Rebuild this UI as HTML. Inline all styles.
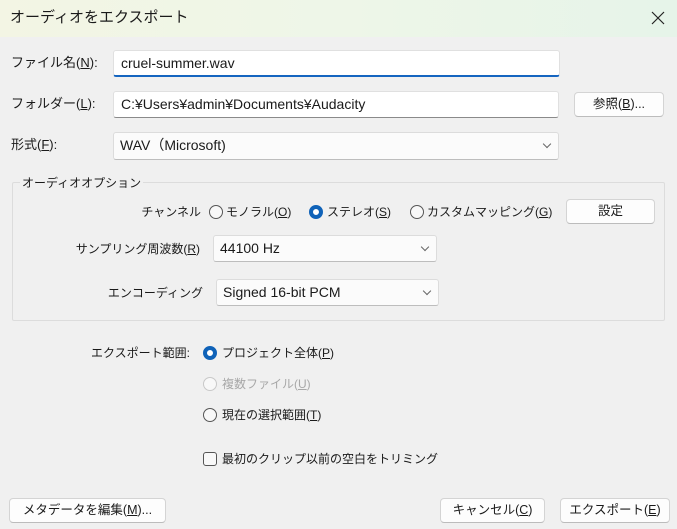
<!DOCTYPE html>
<html><head><meta charset="utf-8"><style>
*{box-sizing:border-box;margin:0;padding:0}
body{width:677px;height:529px;overflow:hidden;background:#f0f0f0;font-family:"Liberation Sans","Noto Sans CJK JP",sans-serif;font-size:12px;color:#1a1a1a;position:relative}
.a{position:absolute;white-space:nowrap;line-height:18px}
.rt{text-align:right}
.title{position:absolute;left:0;top:0;width:677px;height:37px;background:linear-gradient(90deg,#f3f5e4,#eef6e8 50%,#e6f4e9);}
.inp{position:absolute;background:#fff;border:1px solid #e0e0e0;border-bottom:1px solid #8a8a8a;border-radius:3px;padding-left:7px;font-size:14px;line-height:25px}
.sel{position:absolute;background:#fbfbfb;border:1px solid #dcdcdc;border-bottom-color:#bdbdbd;border-radius:3px;padding-left:6px;font-size:14px;line-height:25px}
.chev{position:absolute;right:8px;top:8px;width:6px;height:6px;border-right:1px solid #666;border-bottom:1px solid #666;transform:rotate(45deg)}
.btn{position:absolute;background:#fdfdfd;border:1px solid #d4d4d4;border-bottom-color:#bcbcbc;border-radius:4px;text-align:center;line-height:23px;font-size:12.5px}
.r{position:absolute;width:14px;height:14px;border-radius:50%;border:1px solid #555;background:#f8f8f8}
.r.on{border:4px solid #0f62b8;background:#fff}
.r.dis{border-color:#c8c8c8}
u{text-decoration:underline}
</style></head><body>
<div class="title"></div>
<div class="a" style="left:10px;top:8px;font-size:15px;line-height:20px">オーディオをエクスポート</div>
<svg class="a" style="left:651px;top:11px" width="14" height="14"><path d="M1 1L13 13M13 1L1 13" stroke="#222" stroke-width="1.2"/></svg>

<div class="a" style="left:11px;top:54px;font-size:13px">ファイル名(<u>N</u>):</div>
<div class="inp" style="left:113px;top:50px;width:447px;height:27px;border-bottom:2px solid #1565c0">cruel-summer.wav</div>
<div class="a" style="left:11px;top:95px;font-size:13px">フォルダー(<u>L</u>):</div>
<div class="inp" style="left:113px;top:91px;width:446px;height:27px">C:¥Users¥admin¥Documents¥Audacity</div>
<div class="btn" style="left:574px;top:92px;width:90px;height:25px">参照(<u>B</u>)...</div>
<div class="a" style="left:11px;top:136px;font-size:13px">形式(<u>F</u>):</div>
<div class="sel" style="left:113px;top:132px;width:446px;height:28px">WAV（Microsoft)<span class="chev"></span></div>

<div style="position:absolute;left:12px;top:182px;width:653px;height:139px;border:1px solid #dcdcdc;border-radius:2px"></div>
<div class="a" style="left:20px;top:174px;background:#f0f0f0;padding:0 2px">オーディオオプション</div>

<div class="a rt" style="left:100px;width:101px;top:203px">チャンネル</div>
<div class="r" style="left:209px;top:205px"></div>
<div class="a" style="left:226px;top:203px">モノラル(<u>O</u>)</div>
<div class="r on" style="left:309px;top:205px"></div>
<div class="a" style="left:327px;top:203px">ステレオ(<u>S</u>)</div>
<div class="r" style="left:410px;top:205px"></div>
<div class="a" style="left:427px;top:203px">カスタムマッピング(<u>G</u>)</div>
<div class="btn" style="left:566px;top:199px;width:89px;height:25px">設定</div>

<div class="a rt" style="left:20px;width:180px;top:240px">サンプリング周波数(<u>R</u>)</div>
<div class="sel" style="left:213px;top:235px;width:224px;height:27px">44100 Hz<span class="chev"></span></div>
<div class="a rt" style="left:20px;width:183px;top:284px">エンコーディング</div>
<div class="sel" style="left:216px;top:279px;width:223px;height:27px">Signed 16-bit PCM<span class="chev"></span></div>

<div class="a rt" style="left:20px;width:170px;top:344px">エクスポート範囲:</div>
<div class="r on" style="left:203px;top:346px"></div>
<div class="a" style="left:222px;top:344px">プロジェクト全体(<u>P</u>)</div>
<div class="r dis" style="left:203px;top:377px"></div>
<div class="a" style="left:222px;top:375px;color:#a8a8a8">複数ファイル(<u>U</u>)</div>
<div class="r" style="left:203px;top:408px"></div>
<div class="a" style="left:222px;top:406px">現在の選択範囲(<u>T</u>)</div>
<div style="position:absolute;left:203px;top:452px;width:14px;height:14px;border:1px solid #555;border-radius:3px;background:#f8f8f8"></div>
<div class="a" style="left:222px;top:450px">最初のクリップ以前の空白をトリミング</div>

<div class="btn" style="left:9px;top:498px;width:157px;height:25px">メタデータを編集(<u>M</u>)...</div>
<div class="btn" style="left:440px;top:498px;width:105px;height:25px">キャンセル(<u>C</u>)</div>
<div class="btn" style="left:560px;top:498px;width:110px;height:25px">エクスポート(<u>E</u>)</div>
</body></html>
